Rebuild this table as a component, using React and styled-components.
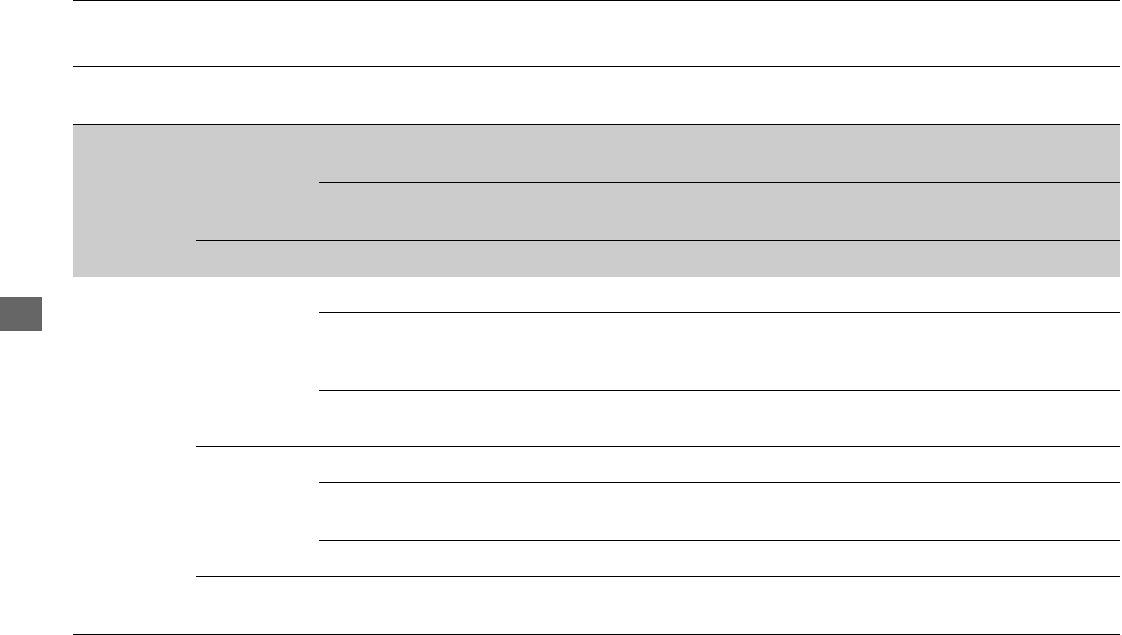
import React from "react";
import styled, { createGlobalStyle } from "styled-components";

const Global = createGlobalStyle`
  html, body { margin: 0; padding: 0; background: #ffffff; overflow: hidden; }
  body { font-family: "Liberation Sans", Arial, sans-serif; }
  * { box-sizing: border-box; }
`;

const Page = styled.div`
  display: flex;
  width: 1122px;
  height: 635px;
`;

const Side = styled.aside`
  width: 73px;
  flex: 0 0 73px;
  padding-top: 297px;
`;

const ThumbTab = styled.div`
  width: 42px;
  height: 34px;
  background: #666666;
`;

const Table = styled.div`
  display: grid;
  width: 1047px;
  grid-template-columns: 123px 123px 1fr;
  grid-template-rows: 66px 58px 58px 58px 37px 35px 78px 56px 36px 58px 36px 58px;
  border-bottom: 1px solid #000;
  align-self: flex-start;
`;

const Cell = styled.div`
  grid-column: ${(p) => p.$col};
  grid-row: ${(p) => p.$row};
  background: ${(p) => (p.$shade ? "#cccccc" : "transparent")};
  border-top: ${(p) => (p.$open ? "0" : "1px solid #000")};
`;

const cells = [
  { col: "1 / 4", row: "1" },
  { col: "1 / 4", row: "2" },
  { col: "1", row: "3 / 6", shade: true },
  { col: "2", row: "3 / 5", shade: true },
  { col: "3", row: "3", shade: true },
  { col: "3", row: "4", shade: true },
  { col: "2 / 4", row: "5", shade: true },
  { col: "1", row: "6 / 13", open: true },
  { col: "2", row: "6 / 9", open: true },
  { col: "3", row: "6", open: true },
  { col: "3", row: "7" },
  { col: "3", row: "8" },
  { col: "2", row: "9 / 12" },
  { col: "3", row: "9" },
  { col: "3", row: "10" },
  { col: "3", row: "11" },
  { col: "2 / 4", row: "12" },
];

export default function App() {
  return (
    <>
      <Global />
      <Page>
        <Side>
          <ThumbTab />
        </Side>
        <Table>
          {cells.map((c, i) => (
            <Cell key={i} $col={c.col} $row={c.row} $shade={c.shade} $open={c.open} />
          ))}
        </Table>
      </Page>
    </>
  );
}
